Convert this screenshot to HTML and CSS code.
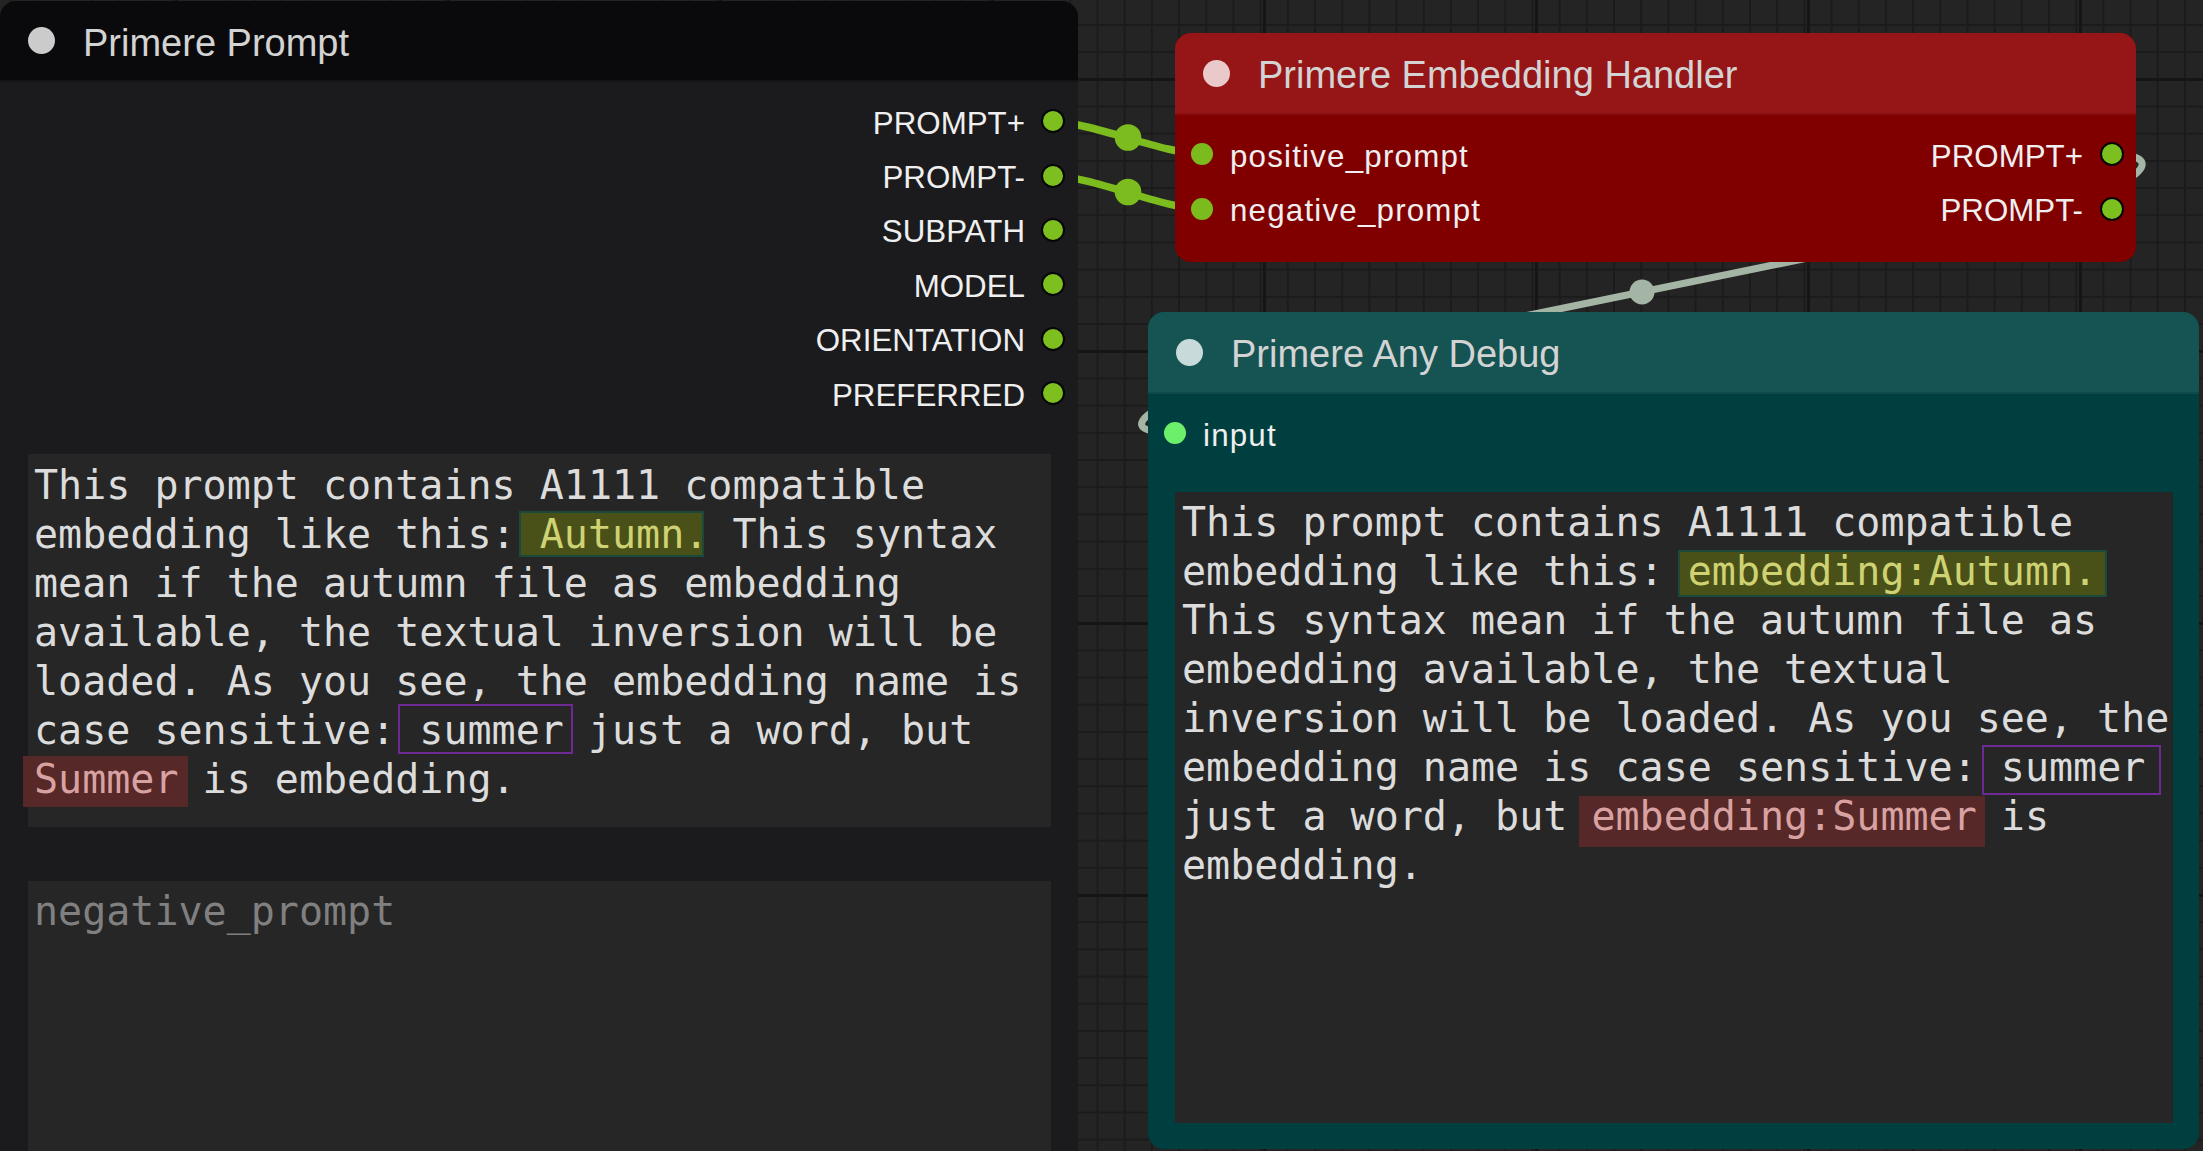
FILE: index.html
```html
<!DOCTYPE html>
<html lang="en">
<head>
<meta charset="utf-8">
<title>Primere nodes</title>
<link rel="stylesheet" href="styles.css">
</head>
<body>
<div class="canvas">
  <svg class="links" width="2203" height="1151" viewBox="0 0 2203 1151">
    <path class="link link-green" d="M1053,122 C1091,122 1164,154 1202,154"/>
    <circle class="mid-green" cx="1128" cy="137.5" r="13.3"/>
    <path class="link link-green" d="M1053,176 C1091,176 1164,209 1202,209"/>
    <circle class="mid-green" cx="1128" cy="192" r="13.3"/>
    <path class="link link-gray" d="M2112,154 C2165,154 2160,185 2000,218.6 L1300,362 C1180,387 1090,433 1175,433"/>
    <circle class="mid-gray" cx="1642" cy="292" r="12.5"/>
  </svg>

  <section class="node node-prompt">
    <header class="node-title">
      <span class="title-dot"></span>
      <span class="title-text">Primere Prompt</span>
    </header>
    <div class="node-body">
      <ul class="slots slots-out">
        <li class="slot slot-out"><span class="slot-label">PROMPT+</span><span class="dot dot-out"></span></li>
        <li class="slot slot-out"><span class="slot-label">PROMPT-</span><span class="dot dot-out"></span></li>
        <li class="slot slot-out"><span class="slot-label">SUBPATH</span><span class="dot dot-out"></span></li>
        <li class="slot slot-out"><span class="slot-label">MODEL</span><span class="dot dot-out"></span></li>
        <li class="slot slot-out"><span class="slot-label">ORIENTATION</span><span class="dot dot-out"></span></li>
        <li class="slot slot-out"><span class="slot-label">PREFERRED</span><span class="dot dot-out"></span></li>
      </ul>
      <div class="textbox textbox-positive">
        <div class="tline">This prompt contains A1111 compatible</div>
        <div class="tline">embedding like this: <span class="hl hl-ok hl-p-autumn">Autumn.</span> This syntax</div>
        <div class="tline">mean if the autumn file as embedding</div>
        <div class="tline">available, the textual inversion will be</div>
        <div class="tline">loaded. As you see, the embedding name is</div>
        <div class="tline">case sensitive: <span class="hl hl-word hl-p-summer">summer</span> just a word, but</div>
        <div class="tline"><span class="hl hl-emb hl-p-summer-emb">Summer</span> is embedding.</div>
      </div>
      <div class="textbox textbox-negative">
        <div class="tline placeholder">negative_prompt</div>
      </div>
    </div>
  </section>

  <section class="node node-embedding">
    <header class="node-title">
      <span class="title-dot"></span>
      <span class="title-text">Primere Embedding Handler</span>
    </header>
    <div class="node-body">
      <div class="slot-pair">
        <div class="slot-in"><span class="dot"></span><span class="slot-label lower">positive_prompt</span></div>
        <div class="slot-in-out"><span class="slot-label">PROMPT+</span><span class="dot dot-out"></span></div>
      </div>
      <div class="slot-pair">
        <div class="slot-in"><span class="dot"></span><span class="slot-label lower">negative_prompt</span></div>
        <div class="slot-in-out"><span class="slot-label">PROMPT-</span><span class="dot dot-out"></span></div>
      </div>
    </div>
  </section>

  <section class="node node-debug">
    <header class="node-title">
      <span class="title-dot"></span>
      <span class="title-text">Primere Any Debug</span>
    </header>
    <div class="node-body">
      <div class="slot-pair">
        <div class="slot-in"><span class="dot dot-any"></span><span class="slot-label lower">input</span></div>
      </div>
      <div class="textbox textbox-debug">
        <div class="tline">This prompt contains A1111 compatible</div>
        <div class="tline">embedding like this: <span class="hl hl-ok hl-d-autumn">embedding:Autumn.</span></div>
        <div class="tline">This syntax mean if the autumn file as</div>
        <div class="tline">embedding available, the textual</div>
        <div class="tline">inversion will be loaded. As you see, the</div>
        <div class="tline">embedding name is case sensitive: <span class="hl hl-word hl-d-summer">summer</span></div>
        <div class="tline">just a word, but <span class="hl hl-emb hl-d-summer-emb">embedding:Summer</span> is</div>
        <div class="tline">embedding.</div>
      </div>
    </div>
  </section>
</div>
</body>
</html>
```

FILE: styles.css
```css
* { box-sizing: border-box; }

html, body {
  margin: 0;
  padding: 0;
}

body {
  width: 2203px;
  height: 1151px;
  overflow: hidden;
  background: #242424;
  font-family: "Liberation Sans", Arial, sans-serif;
}

.canvas {
  position: relative;
  width: 2203px;
  height: 1151px;
  overflow: hidden;
  background-color: #242424;
  background-image:
    linear-gradient(to right, #151515 3px, transparent 3px),
    linear-gradient(to bottom, #151515 3px, transparent 3px),
    linear-gradient(to right, #1b1b1b 2px, transparent 2px),
    linear-gradient(to bottom, #1b1b1b 2px, transparent 2px);
  background-size: 272px 272px, 272px 272px, 27.2px 27.2px, 27.2px 27.2px;
  background-position: 175px 0, 0 78px, 9px 0, 0 24px;
}

/* links layer */
.links {
  position: absolute;
  left: 0;
  top: 0;
}
.link { fill: none; stroke-linecap: round; }
.link-green { stroke: #7cbc1f; stroke-width: 7.5; }
.link-gray { stroke: #a5b5a5; stroke-width: 7; }
.mid-green { fill: #7cbc1f; }
.mid-gray { fill: #a5b5a5; }

/* nodes */
.node {
  position: absolute;
  display: flex;
  flex-direction: column;
  border-radius: 16px;
  overflow: hidden;
}
.node-prompt {
  left: 0;
  top: 1px;
  width: 1078px;
  height: 1220px;
  background: #1b1b1d;
}
.node-embedding {
  left: 1175px;
  top: 33px;
  width: 961px;
  height: 229px;
  background: #800000;
}
.node-debug {
  left: 1148px;
  top: 312px;
  width: 1051px;
  height: 837px;
  background: #003f3f;
}

.node-title {
  flex: none;
  height: 82px;
  display: flex;
  align-items: center;
  gap: 28px;
  padding-left: 28px;
  border-bottom: 2px solid transparent;
}
.node-prompt .node-title { height: 81px; }
.title-dot {
  width: 27px;
  height: 27px;
  border-radius: 50%;
  flex: none;
}
.title-text {
  font-size: 38px;
  line-height: 1;
  padding-top: 4px;
  color: #d3d3d3;
  white-space: nowrap;
}

.node-prompt .node-title { background: #0a0a0c; border-bottom-color: #141416; }
.node-prompt .title-dot { background: #cbcbcb; }
.node-embedding .node-title { background: #961517; border-bottom-color: #870d0e; }
.node-embedding .title-dot { background: #e9c9c9; }
.node-debug .node-title { background: #165353; border-bottom-color: #0e4a4a; }
.node-debug .title-dot { background: #c9dada; }

.node-body {
  flex: 1;
  min-height: 0;
  display: flex;
  flex-direction: column;
  padding-top: 12px;
}

/* slots */
.slots {
  list-style: none;
  margin: 0;
  padding: 0;
}
.slots-out { padding-right: 13px; }
.slot {
  height: 54.4px;
  display: flex;
  align-items: center;
}
.slot-out {
  justify-content: flex-end;
  gap: 16px;
}
.slot-label {
  font-size: 31.3px;
  line-height: 1;
  padding-top: 4px;
  color: #efefef;
  white-space: nowrap;
}
.slot-label.lower { letter-spacing: 1.2px; }

.dot {
  width: 22px;
  height: 22px;
  border-radius: 50%;
  flex: none;
  background: #7cbb1e;
}
.dot-out {
  width: 24px;
  height: 24px;
  border: 2px solid #060606;
  background: #7ebf20;
}
.dot-any { background: #6cf06c; }

.slot-pair {
  height: 54.4px;
  flex: none;
  display: flex;
  align-items: center;
  justify-content: space-between;
  padding: 0 12px 0 16px;
}
.slot-in,
.slot-in-out {
  display: flex;
  align-items: center;
  gap: 17px;
}

/* text areas */
.textbox {
  position: relative;
  z-index: 0;
  background: #262626;
  font-family: "DejaVu Sans Mono", monospace;
  font-size: 40px;
  line-height: 49px;
  color: #dcdcdc;
  padding: 6px 6px;
}
.tline {
  white-space: pre;
  height: 49px;
}
.textbox-positive {
  flex: none;
  height: 373px;
  margin: 34px 27px 0 28px;
  padding-top: 7px;
}
.textbox-negative {
  flex: 1;
  margin: 54px 27px 0 28px;
}
.textbox-debug {
  flex: 1;
  margin: 32px 26px 26px 27px;
  padding-left: 7px;
}
.placeholder { color: #808080; }

/* highlights */
.hl { position: relative; }
.hl::before {
  content: "";
  position: absolute;
  z-index: -1;
}
.hl-ok { color: #cfd273; }
.hl-ok::before {
  background: #4a5118;
  border: 2px solid #1b4a3d;
}
.hl-word::before {
  border: 2px solid #6d2a95;
}
.hl-emb { color: #d9a2a2; }
.hl-emb::before {
  background: #572828;
}

.hl-p-autumn::before { left: -21px; right: 4px; top: 0; bottom: 0; }
.hl-p-summer::before { left: -21px; right: -9px; top: -3px; bottom: -1px; }
.hl-p-summer-emb::before { left: -11px; right: -9px; top: 0; bottom: -5px; }

.hl-d-autumn::before { left: -10px; right: -10px; top: 2px; bottom: -3px; }
.hl-d-summer::before { left: -19px; right: -16px; top: 1px; bottom: -5px; }
.hl-d-summer-emb::before { left: -12px; right: -8px; top: 3px; bottom: -8px; }
```
